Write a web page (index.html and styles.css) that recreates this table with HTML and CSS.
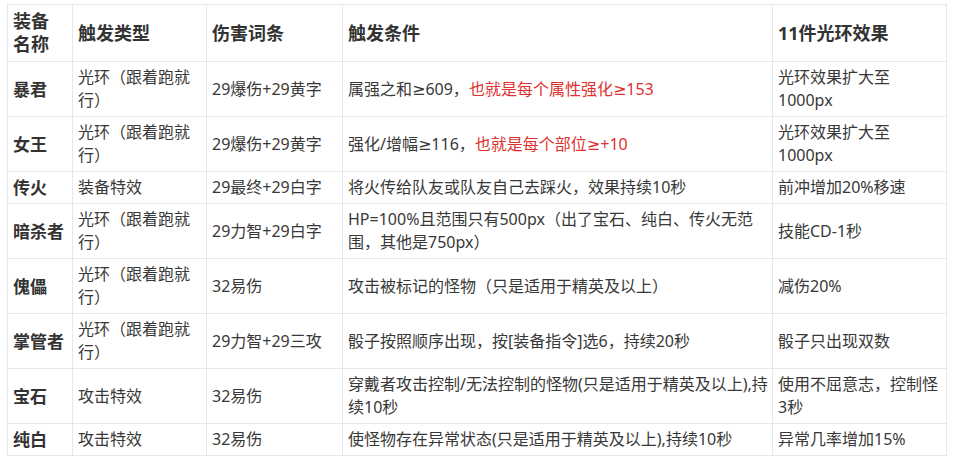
FILE: index.html
```html
<!DOCTYPE html>
<html lang="zh-CN">
<head>
<meta charset="utf-8">
<title>装备光环效果</title>
<link rel="stylesheet" href="styles.css">
</head>
<body>
<table class="gear">
  <colgroup>
    <col class="c1"><col class="c2"><col class="c3"><col class="c4"><col class="c5">
  </colgroup>
  <thead>
    <tr>
      <th>装备<br>名称</th>
      <th>触发类型</th>
      <th>伤害词条</th>
      <th>触发条件</th>
      <th>11件光环效果</th>
    </tr>
  </thead>
  <tbody>
    <tr>
      <td class="name">暴君</td>
      <td>光环（跟着跑就行）</td>
      <td>29爆伤+29黄字</td>
      <td>属强之和≥609，<span class="red">也就是每个属性强化≥153</span></td>
      <td>光环效果扩大至1000px</td>
    </tr>
    <tr>
      <td class="name">女王</td>
      <td>光环（跟着跑就行）</td>
      <td>29爆伤+29黄字</td>
      <td>强化/增幅≥116，<span class="red">也就是每个部位≥+10</span></td>
      <td>光环效果扩大至1000px</td>
    </tr>
    <tr>
      <td class="name">传火</td>
      <td>装备特效</td>
      <td>29最终+29白字</td>
      <td>将火传给队友或队友自己去踩火，效果持续10秒</td>
      <td>前冲增加20%移速</td>
    </tr>
    <tr>
      <td class="name">暗杀者</td>
      <td>光环（跟着跑就行）</td>
      <td>29力智+29白字</td>
      <td>HP=100%且范围只有500px（出了宝石、纯白、传火无范围，其他是750px）</td>
      <td>技能CD-1秒</td>
    </tr>
    <tr>
      <td class="name">傀儡</td>
      <td>光环（跟着跑就行）</td>
      <td>32易伤</td>
      <td>攻击被标记的怪物（只是适用于精英及以上）</td>
      <td>减伤20%</td>
    </tr>
    <tr>
      <td class="name">掌管者</td>
      <td>光环（跟着跑就行）</td>
      <td>29力智+29三攻</td>
      <td>骰子按照顺序出现，按[装备指令]选6，持续20秒</td>
      <td>骰子只出现双数</td>
    </tr>
    <tr>
      <td class="name">宝石</td>
      <td>攻击特效</td>
      <td>32易伤</td>
      <td>穿戴者攻击控制/无法控制的怪物(只是适用于精英及以上),持续10秒</td>
      <td>使用不屈意志，控制怪3秒</td>
    </tr>
    <tr>
      <td class="name">纯白</td>
      <td>攻击特效</td>
      <td>32易伤</td>
      <td>使怪物存在异常状态(只是适用于精英及以上),持续10秒</td>
      <td>异常几率增加15%</td>
    </tr>
  </tbody>
</table>
</body>
</html>
```

FILE: styles.css
```css
html, body {
  margin: 0;
  padding: 0;
  background: #ffffff;
}

body {
  padding: 4px 0 0 7px;
  font-family: "Noto Sans", "DejaVu Sans", "Noto Sans CJK SC", "Microsoft YaHei", sans-serif;
  color: #383838;
}

.gear {
  border-collapse: collapse;
  table-layout: fixed;
  width: 939px;
  font-size: 16px;
  line-height: 23px;
}

.c1 { width: 65px; }
.c2 { width: 134px; }
.c3 { width: 136px; }
.c4 { width: 430px; }
.c5 { width: 174px; }

.gear th,
.gear td {
  border: 1px solid #e4e8ec;
  padding: 4px 4px 4px 5px;
  vertical-align: middle;
  text-align: left;
}

.gear th {
  font-size: 18px;
  font-weight: 700;
  color: #333333;
  padding: 5px 4px 5px 5px;
}

.gear td.name {
  font-weight: 700;
  font-size: 17px;
  color: #333333;
}

.red {
  color: #e0312f;
}
```
